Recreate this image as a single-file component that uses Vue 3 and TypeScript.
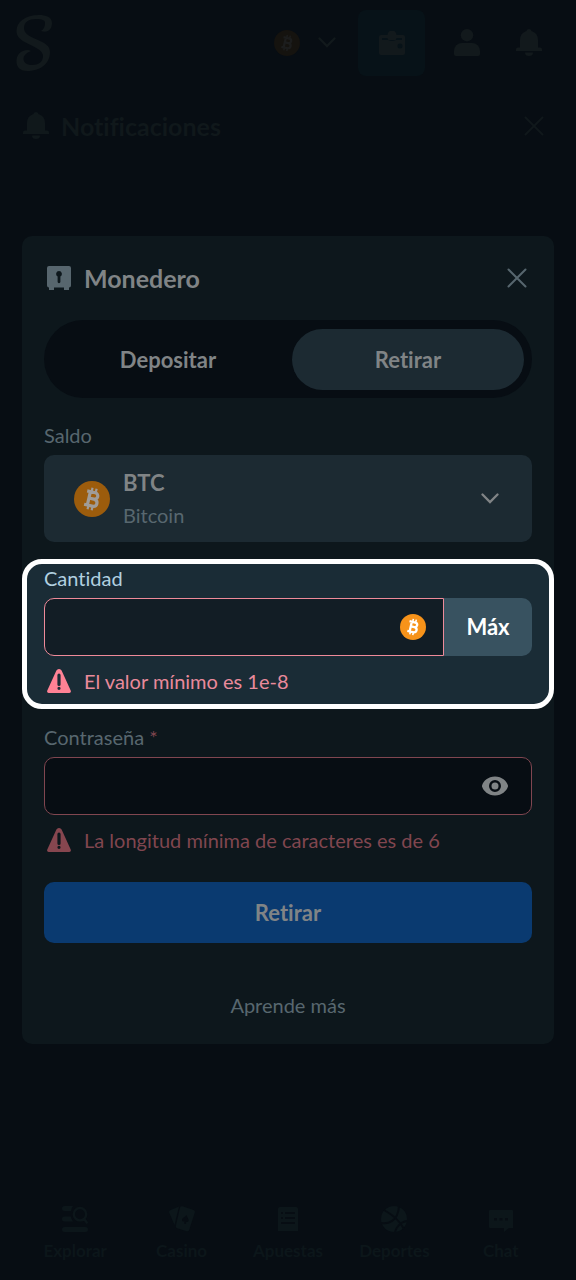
<script setup lang="ts">
import { ref } from 'vue'

type Tab = 'deposit' | 'withdraw'

const tabs: { id: Tab; label: string }[] = [
  { id: 'deposit', label: 'Depositar' },
  { id: 'withdraw', label: 'Retirar' },
]
const links = [
  { id: 'explore', label: 'Explorar' },
  { id: 'casino', label: 'Casino' },
  { id: 'bets', label: 'Apuestas' },
  { id: 'sports', label: 'Deportes' },
  { id: 'chat', label: 'Chat' },
]

const activeTab = ref<Tab>('withdraw')
const currency = ref('BTC')
const amount = ref('')
const password = ref('')
const showPassword = ref(false)
</script>

<template>
  <div class="page">
    <svg class="defs" width="0" height="0" aria-hidden="true">
      <symbol id="coin" viewBox="0 0 36 36">
        <circle cx="18" cy="18" r="18" fill="var(--coin)" />
        <g transform="rotate(13 18 18)" fill="none" stroke="var(--coin-mark)" stroke-width="3.2">
          <path d="M11.5 11.2h8.3a3.1 3.1 0 0 1 0 6.5h-5M19.8 17.8h1a3.6 3.6 0 0 1 0 7.1h-9.3M14.8 11v14" />
          <path d="M16 7v4M20.2 7v4M16 25v4M20.2 25v4" stroke-width="2.2" />
        </g>
      </symbol>
      <symbol id="bell" viewBox="0 0 26 28">
        <path d="M13 0a3 3 0 0 1 2.600 2A9.500 9.500 0 0 1 22 11v7.500h2a2 2 0 0 1 2 2V22H0v-1.500a2 2 0 0 1 2-2h2V11a9.500 9.500 0 0 1 6.400-9A3 3 0 0 1 13 0zM9 23.500h8a4 3.500 0 0 1-8 0z" fill="currentColor" />
      </symbol>
      <symbol id="cross" viewBox="0 0 20 20">
        <path d="M1.500 1.500l17 17M18.500 1.500l-17 17" fill="none" stroke="currentColor" stroke-width="2" stroke-linecap="round" />
      </symbol>
      <symbol id="chevron" viewBox="0 0 18 11">
        <path d="M1.500 1.500L9 9l7.500-7.500" fill="none" stroke="currentColor" stroke-width="2.300" stroke-linecap="round" />
      </symbol>
      <symbol id="warning" viewBox="0 0 24 24">
        <path fill-rule="evenodd" d="M9.400 1.500a3 3 0 0 1 5.200 0l9.100 20a1.700 1.700 0 0 1-1.500 2.500H1.800A1.700 1.700 0 0 1 .3 21.500zM10.400 6.200v9.300a1.600 1.600 0 0 0 3.200 0V6.200a1.600 1.600 0 0 0-3.200 0zM12 17.700a1.600 1.600 0 1 0 0 3.200 1.600 1.600 0 0 0 0-3.200z" fill="currentColor" />
      </symbol>
    </svg>

    <header class="topbar">
      <a class="logo" href="#" aria-label="Inicio">
        <svg width="38" height="58" viewBox="0 0 38 58" fill="currentColor">
          <path d="M26 17C33 19.500 37 15 37 9 37 3 31 1 24 1 10 1 1.500 8 1.500 17c0 6 4 9 12 13 9 4.500 14.500 7 14.500 12 0 6-4.500 9-11 9-5.500 0-8.500-2.500-8.500-6.500 0-3 2.500-5.500 7.500-7.500C12 34 2 37 1.500 46 1 53 5 57 12 57 25 57 35 50 35 38c0-6-5-9-12-12-8-3.500-14-6-14-12 0-6 5-9 12-9 6 0 9 1 9 4 0 3.500-1 6-4 8z" />
        </svg>
      </a>
      <button class="balance" type="button" aria-label="Bitcoin">
        <svg class="dim-coin" width="26" height="26"><use href="#coin" /></svg>
        <svg width="18" height="11"><use href="#chevron" /></svg>
      </button>
      <button class="wallet" type="button" aria-label="Monedero">
        <svg width="26" height="24" viewBox="0 0 26 24">
          <path fill-rule="evenodd" d="M8.500 4a4.500 4.500 0 0 1 9 0H24a2 2 0 0 1 2 2v16a2 2 0 0 1-2 2H2a2 2 0 0 1-2-2V6a2 2 0 0 1 2-2zM3 7v2h20V7h-5.500a4.500 3 0 0 1-9 0zM21 12.500a2.500 2.500 0 1 0 0 5 2.500 2.500 0 0 0 0-5z" fill="currentColor" />
        </svg>
      </button>
      <button class="icon-button" type="button" aria-label="Perfil">
        <svg width="26" height="27" viewBox="0 0 26 27" fill="currentColor">
          <circle cx="13" cy="6.200" r="6.200" />
          <path d="M8 14h10a8 8 0 0 1 8 8v3a2 2 0 0 1-2 2H2a2 2 0 0 1-2-2v-3a8 8 0 0 1 8-8z" />
        </svg>
      </button>
      <button class="icon-button" type="button" aria-label="Notificaciones">
        <svg width="26" height="28"><use href="#bell" /></svg>
      </button>
    </header>

    <section class="notifications">
      <svg width="26" height="28"><use href="#bell" /></svg>
      <h2>Notificaciones</h2>
      <button type="button" aria-label="Cerrar notificaciones">
        <svg width="20" height="20"><use href="#cross" /></svg>
      </button>
    </section>

    <main class="card">
      <div class="card-head">
        <svg width="24" height="24" viewBox="0 0 24 24">
          <path fill-rule="evenodd" d="M2 0h20a2 2 0 0 1 2 2v17.500a2 2 0 0 1-2 2V24h-5v-2.500H7V24H2v-2.500a2 2 0 0 1-2-2V2a2 2 0 0 1 2-2zM12 5a3 3 0 0 0-1.400 5.600v5.200a1.400 1.400 0 0 0 2.800 0v-5.200A3 3 0 0 0 12 5z" fill="currentColor" />
        </svg>
        <h1>Monedero</h1>
        <button type="button" aria-label="Cerrar">
          <svg width="20" height="20"><use href="#cross" /></svg>
        </button>
      </div>

      <div class="tabs" role="tablist">
        <button
          v-for="tab in tabs"
          :key="tab.id"
          type="button"
          role="tab"
          :aria-selected="activeTab === tab.id"
          :class="{ active: activeTab === tab.id }"
          @click="activeTab = tab.id"
        >
          {{ tab.label }}
        </button>
      </div>

      <form @submit.prevent>
        <div class="field">
          <label for="currency">Saldo</label>
          <div class="currency">
            <svg class="muted-coin" width="36" height="36"><use href="#coin" /></svg>
            <span class="names" aria-hidden="true">
              <strong>BTC</strong>
              <span>Bitcoin</span>
            </span>
            <svg width="18" height="11"><use href="#chevron" /></svg>
            <select id="currency" v-model="currency">
              <option value="BTC">BTC Bitcoin</option>
            </select>
          </div>
        </div>

        <div class="field spotlight">
          <label for="amount">Cantidad</label>
          <div class="row">
            <div class="box">
              <input id="amount" v-model="amount" type="text" inputmode="decimal" aria-describedby="amount-error" />
              <svg width="26" height="26"><use href="#coin" /></svg>
            </div>
            <button class="max" type="button">Máx</button>
          </div>
          <p id="amount-error" class="error">
            <svg width="24" height="24"><use href="#warning" /></svg>
            El valor mínimo es 1e-8
          </p>
        </div>

        <div class="field muted">
          <label for="password">Contraseña <span class="required">*</span></label>
          <div class="box">
            <input id="password" v-model="password" :type="showPassword ? 'text' : 'password'" aria-describedby="password-error" />
            <button type="button" aria-label="Mostrar contraseña" @click="showPassword = !showPassword">
              <svg width="26" height="20" viewBox="0 0 26 20">
                <path fill-rule="evenodd" d="M13 .5C6 .5 1.500 5 .2 8.900a3 3 0 0 0 0 2.200C1.500 15 6 19.500 13 19.500S24.500 15 25.800 11.100a3 3 0 0 0 0-2.200C24.500 5 20 .5 13 .5zM13 4a6 6 0 1 1 0 12 6 6 0 0 1 0-12z" fill="currentColor" />
                <circle cx="13" cy="10" r="3.500" fill="currentColor" />
              </svg>
            </button>
          </div>
          <p id="password-error" class="error">
            <svg width="24" height="24"><use href="#warning" /></svg>
            La longitud mínima de caracteres es de 6
          </p>
        </div>

        <button class="submit" type="submit">Retirar</button>
      </form>
      <a class="more" href="#">Aprende más</a>
    </main>

    <nav class="bottom">
      <a v-for="link in links" :key="link.id" href="#">
        <svg width="26" height="26" viewBox="0 0 26 26" fill="currentColor">
          <g v-if="link.id === 'explore'">
            <path d="M2.500 0H11a11 11 0 0 0-2 5H2.500a2.500 2.500 0 0 1 0-5zM2.500 10.500h6.300a11 11 0 0 0 2.200 5H2.500a2.500 2.500 0 0 1 0-5zM2.500 21h21a2.500 2.500 0 0 1 0 5h-21a2.500 2.500 0 0 1 0-5z" />
            <path d="M18 2a6.200 6.200 0 1 1 0 12.400A6.200 6.200 0 0 1 18 2zM22.300 12.800l3 4.600" fill="none" stroke="currentColor" stroke-width="2.400" />
          </g>
          <g v-else-if="link.id === 'casino'">
            <path d="M10 .5L1.200 4.200A2 2 0 0 0 .2 6.700l5.300 12.400z" />
            <path fill-rule="evenodd" d="M13.500.3l11 3.600a2 2 0 0 1 1.300 2.500l-5.600 17.500a2 2 0 0 1-2.500 1.300l-9.500-3a2 2 0 0 1-1.300-2.500L11 1.600A2 2 0 0 1 13.500.3zM17.500 9c-1.500 2.500-4.500 2.500-4.500 5 0 1.700 2 2 2.600 1.200l-.6 2.300 2 .6.200-2.400c2 .8 3-1 2.200-2.500z" />
          </g>
          <path v-else-if="link.id === 'bets'" fill-rule="evenodd" d="M5 1h16a2 2 0 0 1 2 2v22H3V3a2 2 0 0 1 2-2zM6 6v2h2V6zM10 6v2h10V6zM6 11v2h2v-2zM10 11v2h10v-2zM6 16v2h14v-2z" />
          <g v-else-if="link.id === 'sports'">
            <circle cx="13" cy="13" r="13" />
            <path d="M3 4c9 5 16 11 20 19M0 17c7 1 17-1 18-17M14 26c1-4 5-10 12-11" fill="none" stroke="var(--page)" stroke-width="2" />
          </g>
          <path v-else fill-rule="evenodd" d="M2 4h22a1 1 0 0 1 1 1v17h-4l-5 4v-4H2a1 1 0 0 1-1-1V5a1 1 0 0 1 1-1zM6 12v2.500h3V12zM11.500 12v2.500h3V12zM17 12v2.500h3V12z" />
        </svg>
        {{ link.label }}
      </a>
    </nav>
  </div>
</template>

<style>
html,
body {
  margin: 0;
  background: #070d13;
}
</style>

<style scoped>
.page {
  --page: #070d13;
  --coin: #f7931a;
  --coin-mark: #ffffff;
  box-sizing: border-box;
  display: flex;
  flex-direction: column;
  min-height: 100vh;
  padding-bottom: 18px;
  background: var(--page);
  color: #808486;
  font-family: Lato, "Open Sans", "Liberation Sans", sans-serif;
  font-size: 20px;
  font-variant-ligatures: none;
  line-height: 22px;
}
.page *,
.page *::before {
  box-sizing: border-box;
}
svg {
  display: block;
  flex: none;
}
.defs {
  position: absolute;
}
button,
input,
select {
  margin: 0;
  padding: 0;
  border: 0;
  background: none;
  color: inherit;
  font: inherit;
}
button {
  display: flex;
  align-items: center;
  justify-content: center;
  cursor: pointer;
}
a {
  color: inherit;
  text-decoration: none;
}
h1,
h2,
p {
  margin: 0;
}

.topbar {
  display: flex;
  align-items: center;
  height: 85px;
  padding: 0 16px 0 15px;
  color: #12191c;
}
.logo {
  margin-right: auto;
}
.balance {
  gap: 18px;
  height: 48px;
  margin-right: 22px;
}
.dim-coin {
  --coin: #15130f;
  --coin-mark: #1c1d1d;
}
.wallet {
  width: 67px;
  height: 66px;
  margin-right: 11px;
  border-radius: 8px;
  background: #071218;
}
.icon-button {
  width: 62px;
  height: 62px;
}

.notifications {
  display: flex;
  align-items: center;
  gap: 12px;
  height: 81px;
  margin-bottom: 70px;
  padding: 0 32px 0 23px;
  color: #10181b;
}
.notifications button,
.card-head button {
  margin-left: auto;
}
h1,
h2 {
  font-size: 25px;
  line-height: 28px;
  font-weight: 700;
}

.card {
  display: flex;
  flex-direction: column;
  margin: 0 22px;
  padding: 0 22px 28px;
  border-radius: 10px;
  background: #0d171c;
}
.card-head {
  display: flex;
  align-items: center;
  gap: 13px;
  height: 84px;
  padding: 0 5px 0 3px;
  color: #57666e;
}
.card-head h1 {
  color: #808486;
}
.tabs {
  display: grid;
  grid-template-columns: 1fr 1fr;
  gap: 8px;
  margin-bottom: 26px;
  padding: 9px 8px 8px;
  border-radius: 40px;
  background: #070d13;
}
.tabs button {
  height: 61px;
  border-radius: 31px;
  font-size: 22px;
  font-weight: 700;
}
.tabs .active {
  background: #1c2a32;
}

.field label {
  display: block;
  margin-bottom: 9px;
  color: #58676f;
}
.currency {
  position: relative;
  display: flex;
  align-items: center;
  height: 87px;
  padding: 0 33px 0 30px;
  border-radius: 10px;
  background: #1c2a32;
}
.muted-coin {
  --coin: #9c5c0c;
  --coin-mark: #a09c98;
}
.names {
  display: flex;
  flex: 1;
  flex-direction: column;
  gap: 10px;
  margin-left: 13px;
  color: #58676f;
}
.names strong {
  color: #808486;
  font-size: 22px;
}
.currency select {
  position: absolute;
  inset: 0;
  width: 100%;
  opacity: 0;
  cursor: pointer;
}

.spotlight {
  margin: 17px -22px;
  padding: 3px 17px 11px;
  border: 5px solid #ffffff;
  border-radius: 20px;
  background: #1a2c36;
  color: #ffffff;
}
.spotlight label {
  color: #b1d0e0;
}
.row {
  display: flex;
}
.box {
  display: flex;
  flex: 1;
  align-items: center;
  height: 58px;
  padding-right: 17px;
  border: 1px solid #ee8a99;
  border-radius: 10px;
  background: #121d25;
}
.row .box {
  border-radius: 10px 0 0 10px;
}
.box input {
  flex: 1;
  min-width: 0;
  height: 100%;
  padding-left: 16px;
  outline: none;
}
.max {
  width: 88px;
  border-radius: 0 10px 10px 0;
  background: #385260;
  font-size: 22px;
  font-weight: 700;
}
.error {
  display: flex;
  align-items: center;
  gap: 13px;
  margin-top: 13px;
  padding-left: 3px;
  color: #e98a9b;
}
.error svg {
  color: #ff8295;
}
.muted .box {
  padding-right: 23px;
  border-color: #804650;
  background: #070d13;
}
.muted .error,
.muted .required {
  color: #80464f;
}
.muted .error svg {
  color: #86464f;
}
.submit {
  width: 100%;
  height: 61px;
  margin-top: 30px;
  border-radius: 10px;
  background: #0a3a70;
  font-size: 22px;
  font-weight: 700;
}
.more {
  align-self: center;
  margin-top: 51px;
  color: #58676f;
}

.bottom {
  display: grid;
  grid-template-columns: repeat(5, 1fr);
  margin: auto 22px 0;
  color: #0c161a;
  font-size: 17px;
  font-weight: 700;
}
.bottom a {
  display: flex;
  flex-direction: column;
  align-items: center;
  gap: 8px;
}
</style>
